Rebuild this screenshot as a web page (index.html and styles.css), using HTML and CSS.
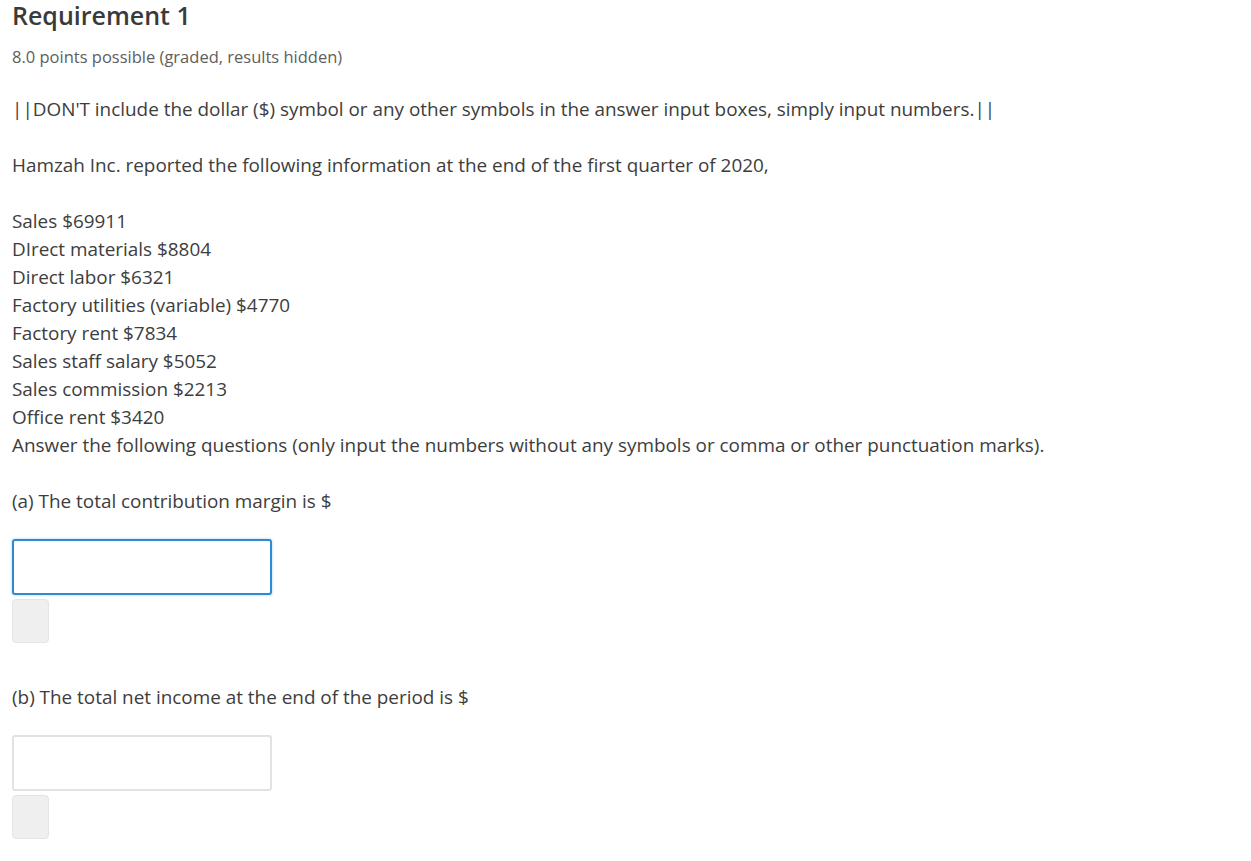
FILE: index.html
```html
<!DOCTYPE html>
<html>
<head>
<meta charset="utf-8">
<link rel="stylesheet" href="styles.css">
</head>
<body>
<div class="problem">
  <h2 class="title">Requirement 1</h2>
  <div class="points">8.0 points possible (graded, results hidden)</div>
  <p class="para">||DON'T include the dollar ($) symbol or any other symbols in the answer input boxes, simply input numbers.||</p>
  <p class="para">Hamzah Inc. reported the following information at the end of the first quarter of 2020,</p>
  <p class="para">Sales $69911<br>DIrect materials $8804<br>Direct labor $6321<br>Factory utilities (variable) $4770<br>Factory rent $7834<br>Sales staff salary $5052<br>Sales commission $2213<br>Office rent $3420<br>Answer the following questions (only input the numbers without any symbols or comma or other punctuation marks).</p>
  <p class="para">(a) The total contribution margin is $</p>
  <div class="answer">
    <input class="box box-focus" type="text">
    <span class="status"></span>
  </div>
  <p class="para para-b">(b) The total net income at the end of the period is $</p>
  <div class="answer">
    <input class="box" type="text">
    <span class="status"></span>
  </div>
</div>
</body>
</html>
```

FILE: styles.css
```css
html, body {
  margin: 0;
  padding: 0;
  background: #ffffff;
}
body {
  font-family: "Open Sans", "Noto Sans", sans-serif;
  color: #3d3d3d;
}
.problem {
  padding: 0 12px;
}
.title {
  margin: 0;
  font-size: 25px;
  font-weight: 600;
  line-height: 30px;
  color: #3a3a3a;
}
.points {
  margin-top: 14px;
  font-size: 16.5px;
  line-height: 26px;
  color: #5e5e5e;
}
.para {
  margin: 25px 0 0 0;
  font-size: 18.9px;
  line-height: 28px;
}
.para + .para {
  margin-top: 28px;
}
.para-b {
  margin-top: 40px !important;
}
.answer {
  margin-top: 24px;
  display: flex;
  flex-direction: column;
  gap: 4px;
  align-items: flex-start;
}
.box {
  box-sizing: border-box;
  width: 260px;
  height: 56px;
  margin: 0;
  border: 2px solid #e2e2e2;
  border-radius: 3px;
  background: #fff;
  outline: none;
}
.box-focus {
  border-color: #2f8ad4;
  box-shadow: 0 0 3px rgba(47, 138, 212, 0.4);
}
.status {
  display: block;
  box-sizing: border-box;
  width: 37px;
  height: 44px;
  background: #efefef;
  border: 1px solid #e4e4e4;
  border-radius: 4px;
}
```
